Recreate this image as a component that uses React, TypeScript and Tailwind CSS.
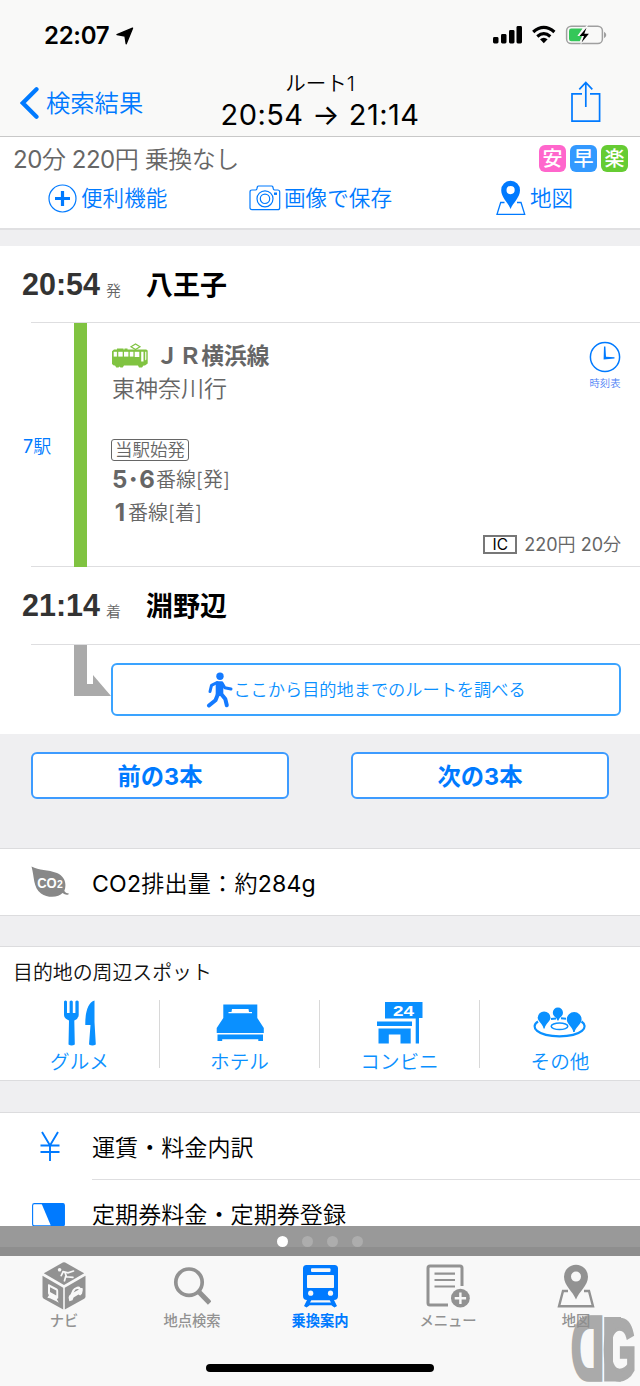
import type { ReactNode } from "react"
import clsx from "clsx"


interface Spot {
    label: string,
    icon: ReactNode
}

interface Tab {
    label: string,
    icon: ReactNode,
    active?: boolean
}

const LocationArrow = () => (
    <svg width="18" height="18" viewBox="0 0 18 18">
        <path d="M16.5 1.2 L1 7.6 L9 9 L10.2 16.7 Z" fill="#000" stroke="#000" strokeWidth="1.4" strokeLinejoin="round" />
    </svg>
)

const StatusIcons = () => (
    <svg width="115" height="20" viewBox="0 0 115 20">
        <g fill="#000">
            <rect x="0" y="12" width="5.5" height="6.5" rx="1.4" />
            <rect x="8" y="9" width="5.5" height="9.5" rx="1.4" />
            <rect x="16" y="5" width="5.5" height="13.5" rx="1.4" />
            <rect x="23.5" y="1" width="5.5" height="17.5" rx="1.4" />
        </g>
        <g fill="none" stroke="#000" strokeWidth="3.3">
            <path d="M40.2 6.9 Q50.8 -2.2 61.4 6.9" />
            <path d="M44.3 11.4 Q50.8 5.9 57.3 11.4" />
        </g>
        <path d="M47 14.3 Q50.8 11.3 54.6 14.3 L50.8 18.2 Z" fill="#000" />
        <rect x="73.6" y="1.2" width="35.8" height="17.4" rx="4.6" fill="none" stroke="#a0a0a0" strokeWidth="1.5" />
        <path d="M111 6.8 Q113.3 8 113.3 10 Q113.3 12 111 13.2 Z" fill="#a0a0a0" />
        <path d="M78.3 3.6 H89.5 L84.5 11 H89 L86.8 16.3 H78.3 Q76 16.3 76 14 V6 Q76 3.6 78.3 3.6Z" fill="#34c759" />
        <path d="M94 0 L84.5 11 H90 L87.2 20 L97.5 8.2 H91.7 L95 0Z" fill="#f9f9f8" />
        <path d="M93.5 2.8 L86.5 11 H91 L88.6 17.5 L95.9 8.7 H91.3Z" fill="#000" />
    </svg>
)

const ShareIcon = () => (
    <svg width="30" height="42" viewBox="0 0 30 42" fill="none" stroke="#007aff" strokeWidth="1.7">
        <path d="M11 12.8 H1 V40.2 H28.6 V12.8 H19" />
        <path d="M14.8 26 V1.5 M8.3 8.3 L14.8 1.5 L21.3 8.3" />
    </svg>
)

const PlusCircle = () => (
    <svg width="29" height="29" viewBox="0 0 29 29" fill="none" stroke="#007aff">
        <circle cx="14.5" cy="14.5" r="13.5" strokeWidth="1.2" />
        <path d="M14.5 7 V22 M7 14.5 H22" strokeWidth="3.2" />
    </svg>
)

const CameraIcon = () => (
    <svg width="32" height="26" viewBox="0 0 32 26" fill="none" stroke="#007aff" strokeWidth="1.2">
        <path d="M3 5 H6.5 Q7.5 5 7.8 4 L8.4 1.8 Q8.7 1 9.6 1 H22.6 Q23.5 1 23.8 1.8 L24.4 4 Q24.7 5 25.7 5 H28.7 Q30.7 5 30.7 7 V22.7 Q30.7 24.7 28.7 24.7 H3 Q1 24.7 1 22.7 V7 Q1 5 3 5Z" />
        <circle cx="16" cy="13.8" r="8" />
        <circle cx="16" cy="13.8" r="4.7" />
        <path d="M25 8.7 H28" strokeWidth="2.4" />
    </svg>
)

const MapPin = ({ thin }: { thin?: boolean }) => (
    <svg
        width={thin ? 30 : 38}
        height={thin ? 36 : 44}
        viewBox={thin ? "0 0 30 36" : "0 0 38 44"}
        fill="none"
        stroke="currentColor"
    >
        {thin ? (
            <>
                <path d="M8.5 22.5 H4.7 L1 34.3 H28.7 L25 22.5 H21" strokeWidth="1.3" />
                <path d="M14.6 29 C12.5 23 5.2 17.5 5.2 10.2 A9.4 9.4 0 0 1 24 10.2 C24 17.5 16.7 23 14.6 29Z M14.6 6 A4.1 4.1 0 1 0 14.6 14.2 A4.1 4.1 0 1 0 14.6 6Z" fill="currentColor" stroke="none" fillRule="evenodd" />
            </>
        ) : (
            <>
                <path d="M11 27 H6 L2 42.2 H36 L32 27 H27" strokeWidth="2.4" />
                <path d="M19 35.5 C16 27.5 7 21.5 7 12.7 A12 12 0 0 1 31 12.7 C31 21.5 22 27.5 19 35.5Z M19 7.6 A5 5 0 1 0 19 17.6 A5 5 0 1 0 19 7.6Z" fill="currentColor" stroke="none" fillRule="evenodd" />
            </>
        )}
    </svg>
)

const TramIcon = () => (
    <svg width="36" height="25" viewBox="0 0 36 25">
        <path d="M19 3.8 L23.5 0.9 L28 3.8 L23.5 6.6 Z" fill="none" stroke="#80c341" strokeWidth="1.2" />
        <path d="M2 6.5 H5 V5.4 H11.5 V6.5 H12.5 V5.4 H15.5 V6.5 H34 Q35.7 6.5 35.7 8 V20.5 L33 22.5 H31.5 L30 24.6 H27 L26 22.5 H12 L10.7 24.6 H8.5 L7.5 23.6 L6.5 24.6 H4.3 L3 22.5 H1.8 L0 21 V8.3 Z" fill="#80c341" />
        <g fill="#fff">
            <rect x="1.7" y="8.8" width="3.2" height="4.8" />
            <rect x="6.3" y="8.8" width="4.4" height="4.8" />
            <rect x="12" y="8.8" width="4.4" height="4.8" />
            <rect x="17.8" y="8.8" width="3.6" height="4.8" />
            <rect x="22.7" y="8.8" width="4.6" height="5.2" />
            <path d="M29.2 8.8 H31.5 V18.5 H29.2Z M33.2 8.8 H34.3 V16.5 L33.2 17.5Z" />
        </g>
    </svg>
)

const ClockIcon = () => (
    <svg width="32" height="32" viewBox="0 0 32 32">
        <circle cx="16" cy="16" r="14.6" fill="none" stroke="#007aff" strokeWidth="1.5" />
        <path d="M15 5.5 H16.4 L17 15.8 L25.5 16.2 V17.6 L14.6 18.5 Z" fill="#007aff" />
    </svg>
)

const WalkIcon = () => (
    <svg width="27" height="36" viewBox="0 0 27 36" fill="none" stroke="#147aff" strokeLinecap="round" strokeLinejoin="round">
        <circle cx="14" cy="4.2" r="3.7" fill="#147aff" stroke="none" />
        <path d="M12 11.5 H15 L15 21 L12 22 Z" fill="#147aff" strokeWidth="4.6" />
        <path d="M11 10.5 L5.5 13.3 L4 19.5" strokeWidth="3" />
        <path d="M16 11 L18.8 15.8 L25 17" strokeWidth="3" />
        <path d="M12 22 L9.5 28.3 L3 33.5" strokeWidth="4" />
        <path d="M14.8 21.5 L19.3 27 L20.8 33.3" strokeWidth="4" />
    </svg>
)

const LeafIcon = () => (
    <svg width="38" height="32" viewBox="0 0 38 32">
        <path d="M0.5 0.5 C8 4.5 17 3.5 26 7 C34 10.5 36 18 33.3 25 Q35.5 27.8 37.5 27 V28.5 Q34.5 29.5 31.5 27 C28 31.5 17 32.5 10 27.5 C2 21.5 3.5 11 0.5 0.5Z" fill="#888" />
        <text x="6.2" y="22" fontSize="14.5" fontWeight="700" fontFamily="Liberation Sans, sans-serif" fill="#fff" textLength="19.5" lengthAdjust="spacingAndGlyphs">CO</text>
        <text x="26" y="22" fontSize="10" fontWeight="700" fontFamily="Liberation Sans, sans-serif" fill="#fff" textLength="5.8" lengthAdjust="spacingAndGlyphs">2</text>
    </svg>
)

const ForkKnifeIcon = () => (
    <svg width="34" height="46" viewBox="0 0 34 46" fill="#0a90ff">
        <path d="M1 1.5 Q2.5 -0.5 4 1.5 V13 H6.6 V1.5 Q8.2 -0.5 9.8 1.5 V13 H12.4 V1.5 Q14 -0.5 15.7 1.5 V15 Q15.7 18.5 11.3 20.5 L11.8 44.5 Q8.5 46.3 5.5 44.5 L6 20.5 Q1 18.5 1 15Z" />
        <path d="M31.5 0.5 V22 L32.8 44.5 Q29.5 46.3 26 44.5 L27.5 25 H22.3 C22 13 25 2 31.5 0.5Z" />
    </svg>
)

const BedIcon = () => (
    <svg width="48" height="38" viewBox="0 0 48 38" fill="#0a90ff">
        <path fillRule="evenodd" d="M7.3 0.5 H41.3 V14 L47.8 24 V29 H0.7 V24 L7.3 14Z M16 5 H32.5 L33 8 H36 V9.3 H12.5 V8 H15.5Z" />
        <path d="M1.5 30.5 H47 V37 H42.3 V35.3 H6.2 V37 H1.5Z" />
    </svg>
)

const StoreIcon = () => (
    <svg width="46" height="42" viewBox="0 0 46 42" fill="#0a90ff">
        <path d="M8 0 H45.5 V16 H42 V41.5 H38.7 V16.5 H8Z" />
        <rect x="0" y="19.5" width="35" height="4.5" />
        <path d="M1.5 26.5 H33.7 V41.5 H23.5 V32.5 H11.8 V41.5 H1.5Z" />
        <text x="16" y="13.8" fontSize="15.5" fontWeight="700" fontFamily="Liberation Sans, sans-serif" fill="#fff" textLength="21" lengthAdjust="spacingAndGlyphs">24</text>
    </svg>
)

const SpotsIcon = () => (
    <svg width="54" height="32" viewBox="0 0 54 32" fill="#0a90ff">
        <g fill="none" stroke="#0a90ff">
            <path d="M5 14.5 C-3.5 20 4 29.3 26.5 29.3 C49 29.3 56.5 20 48.5 14.5" strokeWidth="2.2" />
            <ellipse cx="26.5" cy="19.3" rx="8.3" ry="3.3" strokeWidth="1.5" />
            <path d="M18 12 L23 11.4 M28 11.2 L33 11.7" strokeWidth="2" />
        </g>
        <path d="M10.5 21.5 C10 17 4.7 14.5 4.7 10.8 A6.4 6.4 0 0 1 17.5 10.8 C17.5 14.5 12.1 17 11.7 21.5Z" />
        <path d="M24.4 13.5 C24 10.5 19.8 9.3 19.8 5.7 A5.1 5.1 0 0 1 30 5.7 C30 9.3 26 10.5 25.5 13.5Z" />
        <path d="M40.2 25 C40 20 33.8 17 33.8 12.4 A7.4 7.4 0 0 1 48.6 12.4 C48.6 17 42.2 20 41.7 25Z" />
    </svg>
)

const YenIcon = () => (
    <svg width="20" height="31" viewBox="0 0 20 31" fill="none" stroke="#007aff" strokeWidth="1.9">
        <path d="M2 1 L10 14.5 L18 1 M10 14 V30 M0.5 14.5 H19.5 M0.5 21 H19.5" />
    </svg>
)

const PassIcon = () => (
    <svg width="33" height="24" viewBox="0 0 33 24">
        <rect x="0.6" y="0.6" width="31.8" height="22.3" rx="1.8" fill="#fff" stroke="#007aff" strokeWidth="1.1" />
        <path d="M9.5 0.6 H31 Q32.4 0.6 32.4 2 V21.5 Q32.4 23 31 23 H19Z" fill="#007aff" />
    </svg>
)

const CubeIcon = () => (
    <svg width="44" height="48" viewBox="0 0 44 48" fill="#929292">
        <path d="M20.8 0.6 Q22 0 23.2 0.6 L42.2 11.3 L22 23 L1.8 11.3Z" />
        <path d="M0.5 13.8 L21.2 25.8 V47.5 L1.8 36.8 Q0.5 36 0.5 34.5Z" />
        <path d="M43.5 13.8 L22.8 25.8 V47.5 L42.2 36.8 Q43.5 36 43.5 34.5Z" />
        {/* walker */}
        <circle cx="17.6" cy="7.8" r="1.8" fill="#f8f8f8" />
        <path d="M21 9.5 L26 10.8 L31.5 9 M23 10.5 L24.5 14.8 L31 15.3 M23.8 14 L22.5 18.8 M21 10 L19.2 13.6" fill="none" stroke="#f8f8f8" strokeWidth="1.7" strokeLinecap="round" />
        {/* train */}
        <path fillRule="evenodd" d="M7 22.3 L15 26.6 Q16.2 27.3 16.2 28.7 V36.2 L14.8 37 L16.8 40.8 L14.2 39.3 L8 36.3 L5.4 35.8 L7 33 Q6 32.3 6 31 V23 Q6 21.8 7 22.3Z M8 25.2 V30 L14.3 33.4 V28.6Z" fill="#f8f8f8" />
        {/* car */}
        <path fillRule="evenodd" d="M26.6 35.5 Q26.6 33.5 28.6 32.3 L30.5 28 Q31.5 26.3 35 24.7 Q37.5 24 38.6 26 L40.5 26 Q41.5 28 40 31.8 L38.2 33.6 L36.5 32.6 L31.6 35.6 L30.5 38.3 L27.3 39.3Z M31.5 30.6 L37 27.6 Q35.5 26.2 33.5 27.6Z" fill="#f8f8f8" />
    </svg>
)

const SearchIcon = () => (
    <svg width="38" height="39" viewBox="0 0 38 39" fill="none" stroke="#929292">
        <circle cx="16" cy="15.2" r="13.2" strokeWidth="3.7" />
        <path d="M26.5 25.5 L35 34.2" strokeWidth="5" strokeLinecap="square" />
    </svg>
)

const TrainIcon = () => (
    <svg width="35" height="43" viewBox="0 0 35 43" fill="#007aff">
        <path d="M3.5 0 H31.5 Q35 0.3 35 3.5 V31 Q35 35 31 35 L34 41 L31.5 42.5 L28.5 40.5 H6.5 L3.5 42.5 L1 41 L4 35 Q0 35 0 31 V3.5 Q0 0.3 3.5 0Z" />
        <g fill="#f8f8f8">
            <rect x="8" y="3.3" width="19.5" height="3.8" rx="1" />
            <rect x="4" y="10" width="27" height="13" rx="0.8" />
            <circle cx="7.7" cy="28.2" r="2.6" />
            <circle cx="27.5" cy="28.2" r="2.6" />
            <path d="M8.3 35.3 H26.7 L28 37.5 H7Z" />
            <path d="M5 43 L6.5 40.5 H28.5 L30 43Z" />
        </g>
    </svg>
)

const MenuIcon = () => (
    <svg width="44" height="44" viewBox="0 0 44 44" fill="none" stroke="#929292">
        <path d="M22 41 H4 Q2 41 2 39 V4 Q2 2 4 2 H34 Q36 2 36 4 V22" strokeWidth="3" />
        <path d="M8.5 9.7 H29 M8.5 16 H29 M8.5 22.5 H29" strokeWidth="2.2" />
        <circle cx="34.4" cy="34.2" r="9.4" fill="#929292" stroke="none" />
        <path d="M34.4 28.5 V39.9 M28.7 34.2 H40.1" stroke="#f8f8f8" strokeWidth="2.4" />
    </svg>
)

// Mirrored D next to a G, each with a heavy spine
const CornerLogo = () => (
    <svg className="absolute left-[571px] top-[1317px] overflow-visible" width="65" height="65" viewBox="0 0 65 65">
        <g fill="#8d8d8d" stroke="#8d8d8d" opacity="0.72" fontSize="90" fontWeight="700" fontFamily="Liberation Sans, sans-serif">
            <text transform="translate(33.4 63) scale(-0.52 1)" strokeWidth="3.5">D</text>
            <text transform="translate(31.8 62) scale(0.48 0.95)" strokeWidth="3.5">G</text>
            <path d="M33.2 0 H50 V5.5 H42 V59 H50 V64.5 H33.2Z" stroke="none" />
        </g>
    </svg>
)

const badges = [
    { label: '安', color: 'bg-[#ff66cc]' },
    { label: '早', color: 'bg-[#3399ff]' },
    { label: '楽', color: 'bg-[#66cc33]' }
]

const spots: Spot[] = [
    { label: 'グルメ', icon: <ForkKnifeIcon /> },
    { label: 'ホテル', icon: <BedIcon /> },
    { label: 'コンビニ', icon: <StoreIcon /> },
    { label: 'その他', icon: <SpotsIcon /> }
]

const tabs: Tab[] = [
    { label: 'ナビ', icon: <CubeIcon /> },
    { label: '地点検索', icon: <SearchIcon /> },
    { label: '乗換案内', icon: <TrainIcon />, active: true },
    { label: 'メニュー', icon: <MenuIcon /> },
    { label: '地図', icon: <MapPin /> }
]

const Header = () => (
    <header className="h-[137px] border-b border-[#c8c8c8] bg-[#f9f9f8]">
        <div className="flex h-[70px] items-center justify-between pl-11 pr-[32px]">
            <div className="flex items-center gap-[7px] pt-0.5">
                <span className="text-[24px] font-semibold leading-none tracking-[-0.3px]">22:07</span>
                <LocationArrow />
            </div>
            <StatusIcons />
        </div>
        <div className="grid h-[66px] grid-cols-[200px_1fr_200px]">
            <button className="flex items-center gap-[7px] pl-5 text-[24.3px] leading-none text-[#007aff]">
                <svg width="19" height="32" viewBox="0 0 19 32" fill="none" stroke="#007aff" strokeWidth="4.2" strokeLinecap="round">
                    <path d="M16.5 2.3 L2.8 16 L16.5 29.7" strokeLinejoin="miter" />
                </svg>
                検索結果
            </button>
            <div className="flex flex-col items-center whitespace-nowrap">
                <span className="text-[20.5px] leading-[27px]">ルート1</span>
                <span className="text-[29px] font-normal leading-[36px] tracking-[0.45px]">20:54 → 21:14</span>
            </div>
            <div className="flex items-start justify-end pr-[39px] pt-[11px]">
                <ShareIcon />
            </div>
        </div>
    </header>
)

// CJK runs use the lighter cut, digits stay at regular weight
const Num = ({ children }: { children: ReactNode }) => <span className="font-normal">{children}</span>

const Summary = () => (
    <section className="h-[93px] border-b-2 border-[#e0e0e2] bg-white">
        <div className="flex h-[43px] items-center justify-between pl-[13px] pr-3">
            <p className="pt-0.5 text-[24px] leading-none tracking-[-0.45px] text-[#666]"><Num>20</Num>分 <Num>220</Num>円 乗換なし</p>
            <div className="flex gap-1">
                {badges.map((badge) => (
                    <span
                        key={badge.label}
                        className={clsx("flex size-[27px] items-center justify-center rounded-md text-[20px] font-medium leading-none text-white", badge.color)}
                    >{badge.label}</span>
                ))}
            </div>
        </div>
        <div className="flex h-9 items-center text-[21.6px] leading-none text-[#007aff]">
            <button className="flex w-[201px] items-center gap-1 pl-12"><PlusCircle /><span className="pt-0.5">便利機能</span></button>
            <button className="flex w-[247px] items-center gap-[3px] pl-12"><CameraIcon /><span className="pt-0.5">画像で保存</span></button>
            <button className="flex items-center gap-1 pl-12"><MapPin thin /><span className="pt-0.5">地図</span></button>
        </div>
    </section>
)

const StationRow = ({ time, mark, name }: { time: string, mark: string, name: string }) => (
    <div className="flex h-[76px] items-center pl-[22px]">
        <span className="w-[84px] font-['Liberation_Sans'] text-[30.5px] font-bold leading-none text-[#333]">{time}</span>
        <span className="mt-3 w-10 text-[15px] leading-none text-[#666]">{mark}</span>
        <span className="mt-0.5 text-[27px] font-bold leading-none text-black">{name}</span>
    </div>
)

const Leg = () => (
    <div className="flex h-[244px]">
        <div className="flex w-[74px] items-center pl-[23px] pt-[3px] text-[18px] leading-none text-[#007aff]"><Num>7</Num>駅</div>
        <div className="w-[13px] bg-[#80c341]" />
        <div className="flex flex-1 justify-between pl-[25px] pr-[19px] text-[#666]">
            <div className="flex flex-col items-start pt-[18px]">
                <div className="flex h-7 items-center gap-2">
                    <TramIcon />
                    <span className="pt-0.5 text-[22.7px] font-bold leading-none">ＪＲ横浜線</span>
                </div>
                <span className="mt-1 text-[23px] leading-[32px]">東神奈川行</span>
                <span className="-ml-px mt-[34px] flex h-[22px] w-[78px] items-center justify-center rounded-[3px] border-[1.5px] border-[#666] text-[17.5px] leading-none">当駅始発</span>
                <span className="mt-0.5 flex h-[33px] items-center text-[20px] leading-none"><b className="w-11 text-[24px] font-bold leading-none">5･6</b>番線[発]</span>
                <span className="flex h-[33px] items-center text-[20px] leading-none"><b className="w-4 text-center text-[24px] font-bold leading-none">1</b>番線[着]</span>
            </div>
            <div className="flex flex-col items-end justify-between pb-[13px] pt-[18px]">
                <div className="flex flex-col items-center gap-[5px]">
                    <ClockIcon />
                    <span className="text-[10.3px] leading-none text-[#4a80f5]">時刻表</span>
                </div>
                <div className="flex items-center gap-[7px] text-[18px] leading-none">
                    <span className="flex h-[19px] w-[34px] items-center justify-center border-2 border-[#777] text-[15.5px] font-normal leading-none text-black">IC</span>
                    <span><Num>220</Num>円 <Num>20</Num>分</span>
                </div>
            </div>
        </div>
    </div>
)

const Divider = () => <div className="ml-[31px] h-px bg-[#dedee0]" />

const Route = () => (
    <section className="mt-4 h-[488px] bg-white">
        <StationRow time="20:54" mark="発" name="八王子" />
        <Divider />
        <Leg />
        <div className="-mt-px"><Divider /></div>
        <StationRow time="21:14" mark="着" name="淵野辺" />
        <div className="pt-px"><Divider /></div>
        <div className="flex pl-[74px]">
            <svg width="37" height="51" viewBox="0 0 37 51">
                <path d="M0 0 H13 V39 H19 V30 L37 51 H0Z" fill="#aaa" />
            </svg>
            <button className="mt-[18px] flex h-[53px] w-[510px] items-center justify-center rounded-md border-2 border-[#3aa3ff] text-[17.2px] leading-none text-[#0a90ff]">
                <WalkIcon />ここから目的地までのルートを調べる
            </button>
        </div>
    </section>
)

const PagingButton = ({ children }: { children: ReactNode }) => (
    <button className="h-[47px] w-[258px] rounded-md border-2 border-[#3d9bff] bg-white pt-0.5 text-[23.3px] font-bold leading-none text-[#007aff]">
        {children}
    </button>
)

const NearbySpots = () => (
    <section className="mt-[30px] h-[135px] border-y border-[#dcdcde] bg-white">
        <h2 className="pl-[13px] pt-2.5 text-[19.9px] leading-8 text-[#111]">目的地の周辺スポット</h2>
        <div className="mt-[11px] grid grid-cols-4 divide-x divide-[#d8d8d8]">
            {spots.map((spot) => (
                <button key={spot.label} className="flex h-[68px] flex-col items-center text-[19.6px] leading-none text-[#0a90ff]">
                    <span className="flex h-[46px] shrink-0 items-center">{spot.icon}</span>
                    <span className="mt-[7px]">{spot.label}</span>
                </button>
            ))}
        </div>
    </section>
)

const ListRow = ({ icon, children }: { icon: ReactNode, children: ReactNode }) => (
    <div className="flex h-[66px] items-center text-[23.1px] leading-none text-black">
        <span className="flex w-[92px] items-center pl-[31px]">{icon}</span>
        <span className="pt-[5px]">{children}</span>
    </div>
)

const Pager = () => (
    <div className="flex h-[30px] shrink-0 items-center justify-center gap-[14px] border-b-[9px] border-[#8e8e8e] bg-[#999]">
        {[0, 1, 2, 3].map((page) => (
            <span key={page} className={clsx("mt-[9px] size-[11px] rounded-full", page === 0 ? "bg-white" : "bg-[#adadad]")} />
        ))}
    </div>
)

const TabBar = () => (
    <nav className="h-[130px] bg-[#f8f8f8]">
        <div className="grid h-[108px] grid-cols-5">
            {tabs.map((tab) => (
                <button
                    key={tab.label}
                    className={clsx("flex flex-col items-center text-[14.3px] leading-none", tab.active ? "font-bold text-[#007aff]" : "font-medium text-[#929292]")}
                >
                    <span className="mt-[5px] flex h-[50px] items-center">{tab.icon}</span>
                    <span className="mt-[3px]">{tab.label}</span>
                </button>
            ))}
        </div>
        <div className="mx-auto h-2 w-[228px] rounded-full bg-black" />
    </nav>
)

const App = () => {
    return (
        <div className="relative flex h-[1386px] w-[640px] flex-col overflow-hidden bg-[#efeff1] font-[Inter,'Noto_Sans_CJK_JP',sans-serif] text-black">
            <main className="h-[1226px] shrink-0 overflow-hidden font-[350]">
                <Header />
                <Summary />
                <Route />
                <div className="flex justify-between px-[31px] pt-[18px]">
                    <PagingButton>前の3本</PagingButton>
                    <PagingButton>次の3本</PagingButton>
                </div>
                <section className="mt-[49px] border-y border-[#dcdcde] bg-white">
                    <ListRow icon={<LeafIcon />}><span className="tracking-[0.2px]"><Num>CO2</Num>排出量：約<Num>284g</Num></span></ListRow>
                </section>
                <NearbySpots />
                <section className="mt-[31px] border-t border-[#dcdcde] bg-white">
                    <ListRow icon={<span className="pl-[9px]"><YenIcon /></span>}>運賃・料金内訳</ListRow>
                    <div className="ml-[92px] h-px bg-[#dedee0]" />
                    <ListRow icon={<span className="pl-px pt-1"><PassIcon /></span>}>定期券料金・定期券登録</ListRow>
                </section>
            </main>
            <Pager />
            <TabBar />
            <CornerLogo />
        </div>
    )
}

export default App
